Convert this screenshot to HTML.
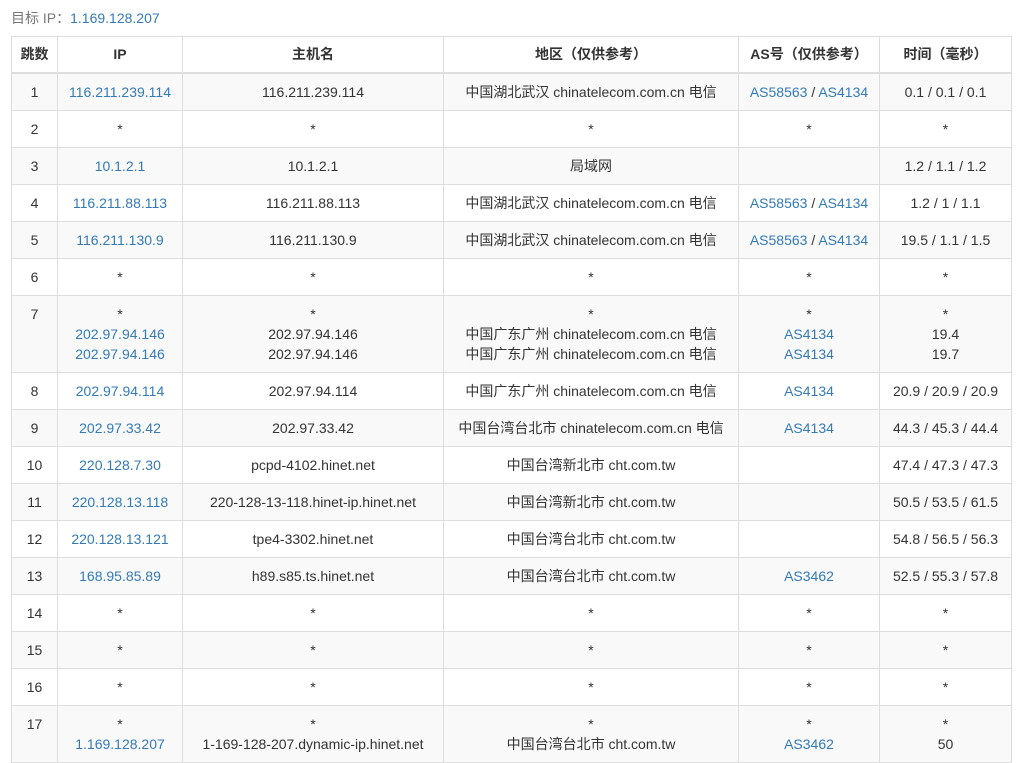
<!DOCTYPE html>
<html><head><meta charset="utf-8"><style>
body{margin:0;background:#fff;font-family:"Liberation Sans","Noto Sans CJK SC",sans-serif;font-size:14px;color:#333;overflow:hidden;width:1024px;height:742px}
.t{position:absolute;left:11px;top:8px;color:#777;font-size:14px}
.t span{color:#337ab7}
table{position:absolute;left:11px;top:36px;border-collapse:collapse;width:1000px;table-layout:fixed}
td,th{border:1px solid #ddd;padding:8px 4px;line-height:20px;text-align:center;vertical-align:top;white-space:nowrap;overflow:hidden}
th{font-weight:bold;border-bottom:2px solid #ddd;padding:7px 4px 8px}
tbody tr:nth-child(odd){background:#f9f9f9}
a{color:#337ab7;text-decoration:none}
</style></head><body>
<div class="t">目标 IP：<span>1.169.128.207</span></div>
<table>
<colgroup><col style="width:46px"><col style="width:125px"><col style="width:261px"><col style="width:295px"><col style="width:141px"><col style="width:132px"></colgroup>
<thead><tr><th>跳数</th><th>IP</th><th>主机名</th><th>地区（仅供参考）</th><th>AS号（仅供参考）</th><th>时间（毫秒）</th></tr></thead>
<tbody>
<tr><td>1</td><td><a>116.211.239.114</a></td><td>116.211.239.114</td><td>中国湖北武汉 chinatelecom.com.cn 电信</td><td><a>AS58563</a> / <a>AS4134</a></td><td>0.1 / 0.1 / 0.1</td></tr>
<tr><td>2</td><td>*</td><td>*</td><td>*</td><td>*</td><td>*</td></tr>
<tr><td>3</td><td><a>10.1.2.1</a></td><td>10.1.2.1</td><td>局域网</td><td></td><td>1.2 / 1.1 / 1.2</td></tr>
<tr><td>4</td><td><a>116.211.88.113</a></td><td>116.211.88.113</td><td>中国湖北武汉 chinatelecom.com.cn 电信</td><td><a>AS58563</a> / <a>AS4134</a></td><td>1.2 / 1 / 1.1</td></tr>
<tr><td>5</td><td><a>116.211.130.9</a></td><td>116.211.130.9</td><td>中国湖北武汉 chinatelecom.com.cn 电信</td><td><a>AS58563</a> / <a>AS4134</a></td><td>19.5 / 1.1 / 1.5</td></tr>
<tr><td>6</td><td>*</td><td>*</td><td>*</td><td>*</td><td>*</td></tr>
<tr><td>7</td><td>*<br><a>202.97.94.146</a><br><a>202.97.94.146</a></td><td>*<br>202.97.94.146<br>202.97.94.146</td><td>*<br>中国广东广州 chinatelecom.com.cn 电信<br>中国广东广州 chinatelecom.com.cn 电信</td><td>*<br><a>AS4134</a><br><a>AS4134</a></td><td>*<br>19.4<br>19.7</td></tr>
<tr><td>8</td><td><a>202.97.94.114</a></td><td>202.97.94.114</td><td>中国广东广州 chinatelecom.com.cn 电信</td><td><a>AS4134</a></td><td>20.9 / 20.9 / 20.9</td></tr>
<tr><td>9</td><td><a>202.97.33.42</a></td><td>202.97.33.42</td><td>中国台湾台北市 chinatelecom.com.cn 电信</td><td><a>AS4134</a></td><td>44.3 / 45.3 / 44.4</td></tr>
<tr><td>10</td><td><a>220.128.7.30</a></td><td>pcpd-4102.hinet.net</td><td>中国台湾新北市 cht.com.tw</td><td></td><td>47.4 / 47.3 / 47.3</td></tr>
<tr><td>11</td><td><a>220.128.13.118</a></td><td>220-128-13-118.hinet-ip.hinet.net</td><td>中国台湾新北市 cht.com.tw</td><td></td><td>50.5 / 53.5 / 61.5</td></tr>
<tr><td>12</td><td><a>220.128.13.121</a></td><td>tpe4-3302.hinet.net</td><td>中国台湾台北市 cht.com.tw</td><td></td><td>54.8 / 56.5 / 56.3</td></tr>
<tr><td>13</td><td><a>168.95.85.89</a></td><td>h89.s85.ts.hinet.net</td><td>中国台湾台北市 cht.com.tw</td><td><a>AS3462</a></td><td>52.5 / 55.3 / 57.8</td></tr>
<tr><td>14</td><td>*</td><td>*</td><td>*</td><td>*</td><td>*</td></tr>
<tr><td>15</td><td>*</td><td>*</td><td>*</td><td>*</td><td>*</td></tr>
<tr><td>16</td><td>*</td><td>*</td><td>*</td><td>*</td><td>*</td></tr>
<tr><td>17</td><td>*<br><a>1.169.128.207</a></td><td>*<br>1-169-128-207.dynamic-ip.hinet.net</td><td>*<br>中国台湾台北市 cht.com.tw</td><td>*<br><a>AS3462</a></td><td>*<br>50</td></tr>
</tbody></table>
</body></html>
